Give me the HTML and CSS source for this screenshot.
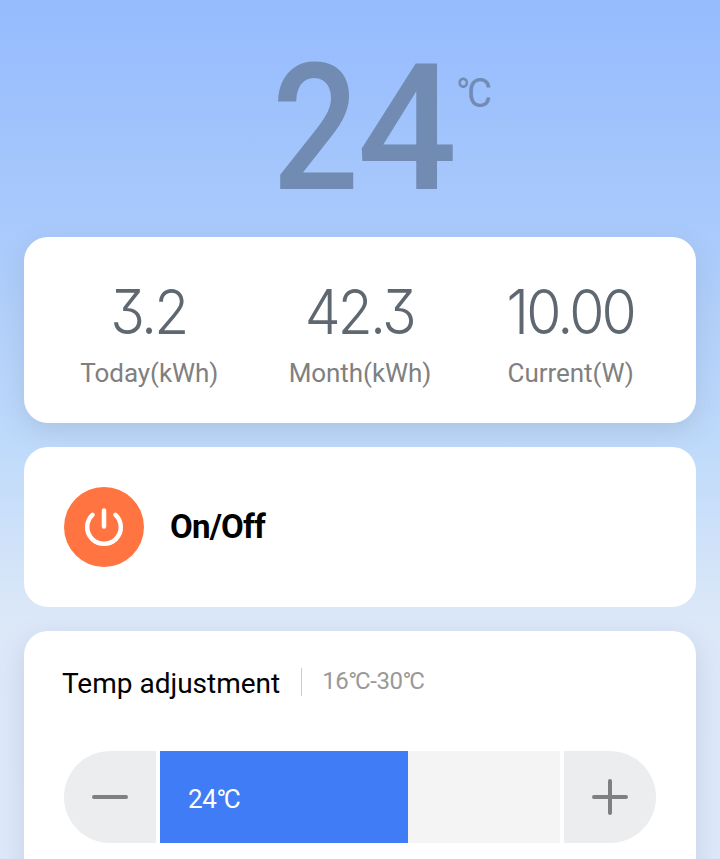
FILE: index.html
```html
<!DOCTYPE html>
<html lang="en"><head><meta charset="utf-8"><title>Air conditioner</title><link rel="stylesheet" href="styles.css"></head>
<body>
<main class="screen">
<header class="reading"><span class="degrees"><span class="two">2</span><span class="four">4</span></span><span class="unit"><span class="ring">°</span>C</span></header>
<section class="card raised stats">
<div class="stat"><strong class="geometric">3.2</strong><span>Today(kWh)</span></div>
<div class="stat"><strong class="geometric">42.3</strong><span>Month(kWh)</span></div>
<div class="stat"><strong class="geometric wide">10.00</strong><span>Current(W)</span></div>
</section>
<section class="card power">
<button class="power-button" aria-label="Power"><svg viewBox="0 0 80 80"><path d="M28.5 27.8A16.8 16.8 0 1 0 51.5 27.8M40 23.5V39.5"/></svg></button>
<span class="power-label">On/Off</span>
</section>
<section class="card raised temp">
<div class="heading"><h2>Temp adjustment</h2><i class="divider"></i><span class="range">16<span class="ring">°</span>C-30<span class="ring">°</span>C</span></div>
<div class="control">
<button class="step minus" aria-label="Decrease"><svg viewBox="0 0 92 92"><path d="M30 46H62"/></svg></button>
<div class="track"><div class="fill"><span>24<span class="ring">°</span>C</span></div></div>
<button class="step plus" aria-label="Increase"><svg viewBox="0 0 92 92"><path d="M30 46H62M46 30V62"/></svg></button>
</div>
</section>
</main>
</body></html>
```
FILE: styles.css
```css
*{box-sizing:border-box}
body{margin:0;font-family:Roboto,sans-serif;color:#000}
button{border:0;padding:0;margin:0}
svg{display:block;fill:none;stroke-linecap:round}
.screen{height:859px;overflow:hidden;padding:0 24px;background:linear-gradient(#96bbfe 0,#a9cafb 230px,#bfdafa 450px,#dce8f8 620px,#dde8fa 859px)}
.reading{height:237px;padding:38px 0 0 248px;display:flex;align-items:flex-start;color:#718bb3}
.degrees{display:flex;width:181px;font-size:176px;line-height:182px}
.two{width:85px;font-weight:500;transform:scaleX(.87);transform-origin:0 0}
.four{width:96px;font-weight:460}
.unit{font-size:40px;line-height:42px;margin:35px 0 0 3px;font-weight:400;letter-spacing:-1px;transform:scaleX(.96);transform-origin:0 0}
.ring{letter-spacing:-.09em}
.card{background:#fff;border-radius:24px;margin-bottom:24px}
.raised{box-shadow:0 8px 24px rgba(110,125,145,.21)}
.stats{height:186px;padding:40px 20px;display:grid;grid-template-columns:repeat(3,1fr)}
.stat{display:flex;flex-direction:column;align-items:center;color:#808080}
.geometric{font-family:Inter,sans-serif;font-feature-settings:"cv09";font-size:62px;line-height:70px;font-weight:355;color:#5f6871;letter-spacing:-3px;margin-left:-2px;transform:scaleX(.92)}
.wide{margin-left:0}
.stat>span{font-size:26px;line-height:30px;margin-top:11px;letter-spacing:-.05px}
.power{height:160px;padding:40px;display:flex;align-items:center;gap:26px}
.power-button{width:80px;height:80px;border-radius:50%;background:#ff7440}
.power-button svg{stroke:#fff;stroke-width:4.5}
.power-label{font-size:33px;line-height:40px;font-weight:680;letter-spacing:-.8px}
.temp{height:260px;padding:32px 38px}
.heading{height:40px;display:flex;align-items:center}
h2{font-size:28px;font-weight:400;margin:0}
.divider{width:1px;height:28px;background:#ccc;margin:-2px 20px 0 21px}
.range{font-size:24px;color:#999;margin-top:-5px;letter-spacing:-.45px}
.control{display:flex;gap:4px;margin:48px 2px 0;height:92px}
.step{width:92px;background:#ebedef}
.step svg{stroke:#808080;stroke-width:4}
.minus{border-radius:46px 0 0 46px}.plus{border-radius:0 46px 46px 0}
.track{flex:1;background:#f4f4f4}
.fill{width:248px;height:100%;background:#407cf5;color:#fff;padding:3px 0 0 28px;display:flex;align-items:center;font-size:26px;letter-spacing:-.4px}
```
